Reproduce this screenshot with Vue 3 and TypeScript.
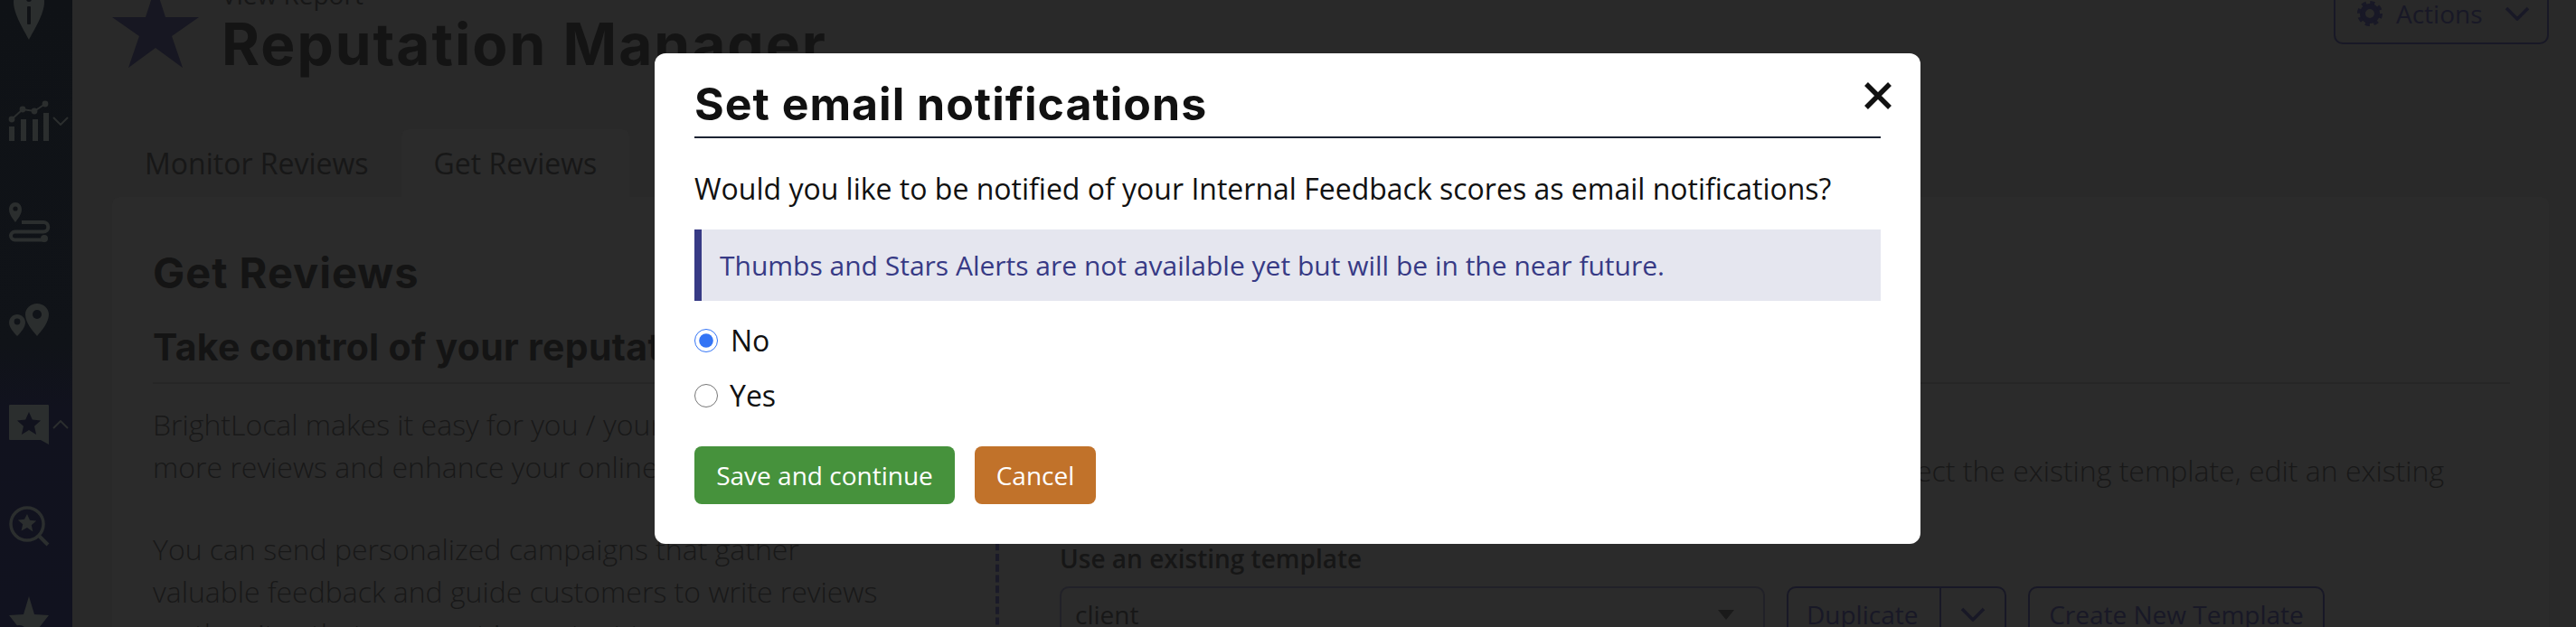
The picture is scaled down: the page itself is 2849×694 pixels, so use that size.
<script setup lang="ts">
import { ref } from 'vue'

const choice = ref<'no' | 'yes'>('no')
const tabs = ['Monitor Reviews', 'Get Reviews']
</script>

<template>
  <div class="page">
    <aside class="sidebar">
      <div class="nav-row">
        <svg class="nav-icon" viewBox="0 0 44 44"><path d="M22 -16C12-16 5-8 5 2c0 14 12 32 17 42 5-10 17-28 17-42 0-10-7-18-17-18z" fill="#2b2e2e"/><rect x="20" y="7" width="4" height="20" rx="1" fill="#101216"/><circle cx="22" cy="-1" r="3" fill="#101216"/></svg>
      </div>
      <div class="nav-row">
        <svg class="nav-icon" viewBox="0 0 44 44"><g fill="#2b2e2e"><rect x="0" y="28" width="6" height="16"/><rect x="13" y="20" width="6" height="24"/><rect x="26" y="20" width="6" height="24"/><rect x="38" y="13" width="6" height="31"/><circle cx="3" cy="20" r="3.4"/><circle cx="15" cy="9" r="3.4"/><circle cx="28" cy="11" r="3.4"/><circle cx="40" cy="3" r="3.4"/></g><path d="M3 20 15 9l13 2L40 3" fill="none" stroke="#2b2e2e" stroke-width="2"/></svg>
        <svg class="nav-chevron" viewBox="0 0 18 10"><path d="M1 1l8 8 8-8" fill="none" stroke="#2b2e2e" stroke-width="2"/></svg>
      </div>
      <div class="nav-row">
        <svg class="nav-icon" viewBox="0 0 44 44"><path d="M7 0C3 0 0 3 0 8c0 5 4 10 7 14 3-4 7-9 7-14 0-5-3-8-7-8z" fill="#2b2e2e"/><circle cx="7" cy="7" r="2.6" fill="#101216"/><path d="M14 22h24a4.5 4.5 0 0 1 0 10.500H6.500a4.500 4.500 0 0 0 0 9H38" fill="none" stroke="#2b2e2e" stroke-width="4"/><circle cx="39" cy="40" r="4" fill="#2b2e2e"/></svg>
      </div>
      <div class="nav-row">
        <svg class="nav-icon icon-pins" viewBox="0 0 44 36"><path d="M9 12C4 12 0 16 0 21c0 5 5 11 9 15 4-4 9-10 9-15 0-5-4-9-9-9z" fill="#2b2e2e"/><circle cx="9" cy="20" r="3.400" fill="#101318"/><path d="M31 0C24 0 18 5 18 12c0 9 8 18 13 24 5-6 13-15 13-24 0-7-6-12-13-12z" fill="#2b2e2e"/><circle cx="31" cy="12" r="5" fill="#101318"/></svg>
      </div>
      <div class="nav-row">
        <svg class="nav-icon" viewBox="0 0 44 44"><path d="M0 1a1 1 0 0 1 1-1h42a1 1 0 0 1 1 1v43l-9-5H1a1 1 0 0 1-1-1z" fill="#2b2e2e"/><path d="M22 8l3.800 8.600 9.200.9-7 6.200 2.100 9.200L22 28l-8.100 4.900 2.100-9.200-7-6.200 9.200-.9z" fill="#11121d"/></svg>
        <svg class="nav-chevron" viewBox="0 0 18 10"><path d="M1 9l8-8 8 8" fill="none" stroke="#2b2e2e" stroke-width="2"/></svg>
      </div>
      <div class="nav-row">
        <svg class="nav-icon" viewBox="0 0 44 44"><circle cx="20" cy="20" r="18" fill="none" stroke="#2b2e2e" stroke-width="3.500"/><path d="M33 33l10 10" stroke="#2b2e2e" stroke-width="4"/><path d="M20 9l3 6.800 7.200.7-5.400 4.800 1.600 7.200L20 24l-6.400 3.500 1.600-7.200-5.400-4.800 7.200-.7z" fill="#2b2e2e"/></svg>
      </div>
      <div class="nav-row">
        <svg class="nav-icon star-plus" viewBox="0 0 44 44"><path d="M22 -12l6 20 16 1-11 14 3 21H8l3-21L0 9l16-1z" fill="#2b2e2e"/><circle cx="11" cy="30" r="10" fill="#11121d"/></svg>
      </div>
    </aside>

    <main class="main">
      <header class="header">
        <svg class="header-star" viewBox="0 0 96 90"><path d="M48 0l11 34h37L66 55l12 35-30-22-30 22 12-35L0 34h37z" fill="#171722"/></svg>
        <div class="header-titles">
          <div class="kicker">View Report</div>
          <h1 class="page-title">Reputation Manager</h1>
        </div>
        <button class="actions" type="button">
          <svg class="gear" viewBox="0 0 28 28"><circle cx="14" cy="14" r="8" fill="none" stroke="#181826" stroke-width="6"/><circle cx="14" cy="14" r="12" fill="none" stroke="#181826" stroke-width="4" stroke-dasharray="5 4.420"/></svg>
          <span>Actions</span>
          <svg class="actions-chevron" viewBox="0 0 28 16"><path d="M2 2l12 12L26 2" fill="none" stroke="#181826" stroke-width="3.500"/></svg>
        </button>
      </header>

      <nav class="tabs">
        <span v-for="(tab, i) in tabs" :key="tab" class="tab" :class="{ active: i === 1 }">{{ tab }}</span>
      </nav>

      <section class="panel">
        <h2 class="panel-title">Get Reviews</h2>
        <h3 class="panel-sub">Take control of your reputation</h3>
        <div class="columns">
          <div class="col-left">
            <p>BrightLocal makes it easy for you / your clients to get<br />more reviews and enhance your online reputation.</p>
            <p>You can send personalized campaigns that gather<br />valuable feedback and guide customers to write reviews<br />on the sites that are most important to</p>
          </div>
          <div class="col-right">
            <p class="right-text">select the existing template, edit an existing</p>
            <div class="field-label">Use an existing template</div>
            <div class="field-row">
              <div class="select"><span>client</span><i class="caret"></i></div>
              <div class="split">
                <span class="split-main">Duplicate</span>
                <span class="split-arrow"><svg viewBox="0 0 28 16"><path d="M2 2l12 12L26 2" fill="none" stroke="#181826" stroke-width="3.500"/></svg></span>
              </div>
              <div class="outline-btn">Create New Template</div>
            </div>
          </div>
        </div>
      </section>
    </main>

    <div class="overlay">
      <div class="modal" role="dialog">
        <div class="modal-head">
          <h2 class="modal-title">Set email notifications</h2>
          <svg class="close" viewBox="0 0 30 30"><path d="M2 2l26 26M28 2L2 28" stroke="#111" stroke-width="5.500" fill="none"/></svg>
        </div>
        <p class="question">Would you like to be notified of your Internal Feedback scores as email notifications?</p>
        <div class="notice">Thumbs and Stars Alerts are not available yet but will be in the near future.</div>
        <label class="radio radio-no"><input v-model="choice" type="radio" name="notify" value="no" /><span>No</span></label>
        <label class="radio radio-yes"><input v-model="choice" type="radio" name="notify" value="yes" /><span>Yes</span></label>
        <div class="modal-actions">
          <button class="btn save" type="button">Save and continue</button>
          <button class="btn cancel" type="button">Cancel</button>
        </div>
      </div>
    </div>
  </div>
</template>

<style>
html, body { margin: 0; background: #292929; overflow: hidden; }
</style>

<style scoped>
* { box-sizing: border-box; }
.page {
  position: relative;
  display: flex;
  width: 2849px;
  height: 694px;
  overflow: hidden;
  background: #292929;
  font-family: "Open Sans", "Noto Sans", sans-serif;
  color: #171717;
}
.sidebar {
  flex: 0 0 80px;
  height: 694px;
  padding-left: 10px;
  background: linear-gradient(#0f1216 0, #101318 55%, #11121e 65%, #11121f 100%);
}
.nav-row { display: flex; align-items: flex-start; height: 112px; }
.nav-icon { width: 44px; height: 44px; overflow: visible; flex: none; }
.icon-pins { height: 36px; }
.nav-chevron { width: 18px; height: 10px; margin: 17px 0 0 4px; flex: none; }
.star-plus { overflow: visible; }

.main { flex: 1; min-width: 0; padding: 0 30px 0 44px; }
.header { display: flex; align-items: flex-start; height: 143px; }
.header-star { width: 96px; height: 90px; margin-top: -15px; flex: none; }
.header-titles { margin: -21px 0 0 25px; }
.kicker { font-size: 28px; line-height: 30px; color: #171717; }
.page-title {
  margin: 0;
  font-family: Inter, sans-serif;
  font-weight: 700;
  font-size: 64px;
  line-height: 80px;
  letter-spacing: 2px;
  color: #141414;
}
.actions {
  display: flex;
  align-items: center;
  width: 238px;
  height: 68px;
  margin: -19px 0 0 auto;
  padding: 0 0 0 24px;
  background: none;
  border: 2px solid #181826;
  border-radius: 10px;
  font-family: inherit;
  font-size: 28px;
  color: #181826;
}
.gear { width: 28px; height: 28px; flex: none; }
.actions span { margin-left: 15px; }
.actions-chevron { width: 28px; height: 16px; margin-left: 24px; flex: none; }

.tabs { display: flex; height: 75px; padding-left: 0; }
.tab {
  display: flex;
  align-items: center;
  height: 75px;
  padding: 0 36px;
  font-size: 32px;
  color: #171717;
}
.tab.active { background: #2b2b2b; border-radius: 8px 8px 0 0; }

.panel {
  height: 480px;
  padding: 0 43px 0 45px;
  background: #2b2b2b;
  border-radius: 8px 8px 0 0;
}
.panel-title {
  margin: 0;
  padding-top: 54px;
  font-family: Inter, sans-serif;
  font-weight: 700;
  font-size: 47px;
  line-height: 60px;
  letter-spacing: 1px;
  color: #141414;
}
.panel-sub {
  height: 66px;
  margin: 27px 0 0;
  font-family: Inter, sans-serif;
  font-weight: 700;
  font-size: 41px;
  line-height: 50px;
  letter-spacing: 0.3px;
  color: #141414;
  border-bottom: 2px solid #262626;
  white-space: nowrap;
}
.columns { display: flex; }
.col-left {
  flex: 0 0 936px;
  height: 290px;
  padding-top: 21px;
  font-size: 32px;
  font-weight: 300;
  line-height: 47px;
  color: #181818;
  border-right: 4px dashed #1a1a28;
}
.col-left p { margin: 0 0 44px; white-space: nowrap; }
.col-right { flex: 1; padding-left: 67px; min-width: 0; }
.right-text {
  width: 1531px;
  margin: 72px 0 0;
  font-size: 32px;
  font-weight: 300;
  line-height: 47px;
  text-align: right;
  white-space: nowrap;
  color: #181818;
}
.field-label { margin-top: 55px; font-size: 28px; font-weight: 600; line-height: 38px; color: #161616; }
.field-row { display: flex; gap: 24px; margin-top: 12px; }
.select, .split, .outline-btn {
  display: flex;
  align-items: center;
  height: 62px;
  border: 2px solid #181826;
  border-radius: 10px;
  font-size: 28px;
  color: #181826;
}
.select { width: 780px; padding: 0 32px 0 15px; justify-content: space-between; border-color: #212128; color: #171717; }
.caret { width: 0; height: 0; border: 9px solid transparent; border-top: 11px solid #1a1a1a; border-bottom: 0; }
.split { width: 243px; }
.split-main { width: 169px; padding-left: 20px; line-height: 58px; border-right: 2px solid #181826; }
.split-arrow { display: flex; flex: 1; justify-content: center; }
.split-arrow svg { width: 28px; height: 16px; }
.outline-btn { width: 328px; justify-content: center; }

.overlay {
  position: absolute;
  inset: 0;
  display: flex;
  justify-content: center;
  align-items: flex-start;
  padding: 59px 1px 0 0;
}
.modal {
  width: 1400px;
  height: 543px;
  padding: 0 44px;
  background: #fff;
  border-radius: 12px;
  color: #111;
}
.modal-head {
  display: flex;
  justify-content: space-between;
  height: 94px;
  border-bottom: 2px solid #1c2433;
}
.modal-title {
  margin: 26px 0 0;
  font-family: Inter, sans-serif;
  font-weight: 700;
  font-size: 50px;
  line-height: 60px;
  letter-spacing: 1px;
  color: #111;
}
.close { width: 30px; height: 30px; margin: 32px -12px 0 0; flex: none; }
.question { margin: 34px 0 0; font-size: 32px; line-height: 44px; color: #111; white-space: nowrap; }
.notice {
  display: flex;
  align-items: center;
  height: 79px;
  margin-top: 23px;
  padding-left: 20px;
  background: #e5e6ef;
  border-left: 8px solid #373a85;
  font-size: 30px;
  color: #373a85;
}
.radio { display: flex; align-items: center; font-size: 32px; line-height: 44px; color: #111; }
.radio input { width: 26px; height: 26px; margin: 0; accent-color: #3374f5; flex: none; }
.radio span { margin-left: 14px; }
.radio-no { margin-top: 22px; }
.radio-yes { margin-top: 17px; }
.radio-yes span { margin-left: 13px; }
.modal-actions { display: flex; gap: 22px; margin-top: 34px; }
.btn {
  height: 64px;
  border: 0;
  border-radius: 8px;
  font-family: inherit;
  font-size: 28px;
  color: #fff;
}
.save { width: 288px; background: #46923c; }
.cancel { width: 134px; background: #c1722a; }
</style>
